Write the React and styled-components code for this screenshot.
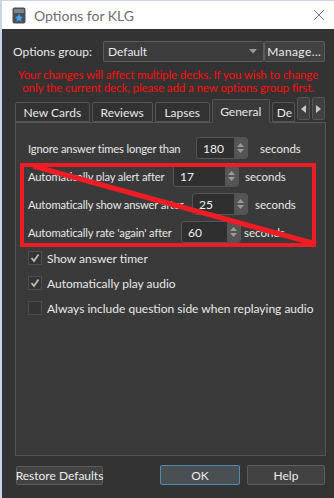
import React from "react";
import styled, { createGlobalStyle } from "styled-components";

const Global = createGlobalStyle`
  html, body { margin: 0; padding: 0; background: #c9d4e4; }
  body { font-family: Lato, "Open Sans", sans-serif; font-size: 12px; }
`;

const Window = styled.div`
  width: 332px;
  height: 497px;
  margin-left: 2px;
  margin-top: 1px;
  display: flex;
  flex-direction: column;
  background: #333333;
  overflow: hidden;
`;

const TitleBar = styled.div`
  height: 28px;
  background: #ffffff;
  display: flex;
  align-items: center;
  padding-left: 10px;
  gap: 8px;
  flex-shrink: 0;
`;

const TitleText = styled.span`
  flex: 1;
  color: #6d6d6d;
  font-size: 14px;
`;

const CloseX = styled.span`
  width: 30px;
  display: flex;
  justify-content: center;
`;

const Body = styled.div`
  flex: 1;
  display: flex;
  flex-direction: column;
  padding: 12px 9px 0 11px;
  color: #e8e8e8;
  & > * { flex-shrink: 0; }
`;

const GroupRow = styled.div`
  display: flex;
  align-items: center;
  height: 21px;
`;

const Label = styled.span`
  white-space: nowrap;
  flex-shrink: 0;
  width: ${(p) => (p.w ? `${p.w}px` : "auto")};
  font-size: ${(p) => p.fs || 12}px;
  letter-spacing: ${(p) => p.ls || 0}px;
`;

const Combo = styled.div`
  width: 162px;
  height: 21px;
  box-sizing: border-box;
  margin-left: ${(p) => p.ml}px;
  border: 1px solid #5c5c5c;
  border-radius: 2px;
  background: #3c3c3c;
  display: flex;
  align-items: center;
  padding: 0 6px 0 4px;
  justify-content: space-between;
`;

const Button = styled.div`
  box-sizing: border-box;
  height: ${(p) => p.h || 20}px;
  width: ${(p) => p.w}px;
  margin-left: ${(p) => p.ml || 0}px;
  border: 1px solid ${(p) => (p.focus ? "#4d8bb3" : "#5c5c5c")};
  border-radius: 2px;
  background: ${(p) => (p.focus ? "#4a4f53" : "#424242")};
  display: flex;
  align-items: center;
  justify-content: center;
  color: #ececec;
  white-space: nowrap;
  letter-spacing: ${(p) => p.ls || 0}px;
`;

const Warning = styled.div`
  margin-top: 6px;
  color: #ff0d0d;
  text-align: center;
  line-height: 13px;
  font-size: 11.5px;
  letter-spacing: -0.1px;
  white-space: nowrap;
  padding-right: 2px;
`;

const TabBar = styled.div`
  margin-top: 5px;
  height: 23px;
  display: flex;
  align-items: flex-end;
  gap: 2px;
  position: relative;
  z-index: 1;
  margin-left: 2px;
`;

const Tab = styled.div`
  box-sizing: border-box;
  width: ${(p) => p.w}px;
  height: ${(p) => (p.active ? 24 : 20)}px;
  border: 1px solid #555;
  border-bottom: ${(p) => (p.active ? "1px solid #3a3a3a" : "1px solid #555")};
  border-radius: 2px 2px 0 0;
  background: ${(p) => (p.active ? "#3a3a3a" : "#323232")};
  display: flex;
  align-items: center;
  justify-content: ${(p) => (p.clip ? "flex-start" : "center")};
  padding-left: ${(p) => (p.clip ? 4 : 0)}px;
  overflow: hidden;
  white-space: nowrap;
  color: #e8e8e8;
  margin-bottom: ${(p) => (p.active ? -1 : 0)}px;
`;

const ScrollBtn = styled.div`
  box-sizing: border-box;
  width: 13px;
  height: 23px;
  align-self: flex-start;
  margin-top: -2px;
  border: 1px solid #555;
  border-radius: 2px;
  background: #404040;
  display: flex;
  align-items: center;
  justify-content: center;
`;

const Panel = styled.div`
  width: 311px;
  height: 334px;
  box-sizing: border-box;
  border: 1px solid #555;
  background: #3a3a3a;
  padding: 14px 0 0 12px;
  display: flex;
  flex-direction: column;
  margin-left: 2px;
`;

const Row = styled.div`
  display: flex;
  align-items: center;
  height: 22px;
  margin-bottom: ${(p) => p.mb || 6}px;
`;

const Spin = styled.div`
  box-sizing: border-box;
  width: ${(p) => p.w}px;
  height: 22px;
  margin-left: ${(p) => p.ml}px;
  margin-right: ${(p) => p.mr}px;
  border: 1px solid #555;
  border-radius: 3px;
  background: #2f2f2f;
  display: flex;
  align-items: stretch;
  overflow: hidden;
  flex-shrink: 0;
`;

const SpinValue = styled.span`
  flex: 1;
  display: flex;
  align-items: center;
  padding-left: 6px;
  color: #f0f0f0;
`;

const SpinArrows = styled.div`
  width: 13px;
  background: #555555;
  display: flex;
  align-items: center;
  justify-content: center;
`;

const Highlight = styled.div`
  position: relative;
`;

const Mark = styled.svg`
  position: absolute;
  left: -8px;
  top: -2px;
  pointer-events: none;
`;

const Check = styled.div`
  display: flex;
  align-items: center;
  gap: 5px;
  height: 14px;
  margin-bottom: 11px;
`;

const Box = styled.div`
  box-sizing: border-box;
  width: 14px;
  height: 14px;
  border: 1px solid #505050;
  background: #343434;
  display: flex;
  align-items: center;
  justify-content: center;
`;

const Footer = styled.div`
  margin-top: 9px;
  display: flex;
  align-items: center;
  padding-left: 3px;
`;

const Spacer = styled.div`
  flex: 1;
`;

const Arrows = () => (
  <svg width="9" height="14" viewBox="0 0 9 14">
    <path d="M1 6 L4.5 2 L8 6 Z" fill="#9a9a9a" />
    <path d="M1 8 L4.5 12 L8 8 Z" fill="#9a9a9a" />
  </svg>
);

const Tick = ({ on }) =>
  on ? (
    <svg width="10" height="10" viewBox="0 0 10 10">
      <path d="M1.5 5 L4 8 L8.5 1.5" stroke="#bcbcbc" strokeWidth="1.8" fill="none" />
    </svg>
  ) : null;

const SpinRow = ({ label, lw, value, w, ml, mr, mb }) => (
  <Row mb={mb}>
    <Label w={lw} fs={11.2} ls={-0.15}>{label}</Label>
    <Spin w={w} ml={ml} mr={mr}>
      <SpinValue>{value}</SpinValue>
      <SpinArrows>
        <Arrows />
      </SpinArrows>
    </Spin>
    <Label fs={11.5}>seconds</Label>
  </Row>
);

export default function App() {
  return (
    <>
      <Global />
      <Window>
        <TitleBar>
          <svg width="14" height="17" viewBox="0 0 14 17">
            <rect x="0.5" y="0.5" width="13" height="16" rx="2" fill="#4a4f57" />
            <rect x="2" y="2" width="10" height="4" rx="1" fill="#7d838c" />
            <path d="M7 7 L8.3 9.6 L11 10 L9 11.8 L9.5 14.5 L7 13.2 L4.5 14.5 L5 11.8 L3 10 L5.7 9.6 Z" fill="#3fa3f0" />
          </svg>
          <TitleText>Options for KLG</TitleText>
          <CloseX>
            <svg width="12" height="12" viewBox="0 0 12 12">
              <path d="M1 1 L11 11 M11 1 L1 11" stroke="#7a7a7a" strokeWidth="1" />
            </svg>
          </CloseX>
        </TitleBar>
        <Body>
          <GroupRow>
            <Label>Options group:</Label>
            <Combo ml={11}>
              <span>Default</span>
              <svg width="8" height="5" viewBox="0 0 8 5">
                <path d="M0 0 L8 0 L4 4.5 Z" fill="#9a9a9a" />
              </svg>
            </Combo>
            <Spacer />
            <Button w={62} h={21} ls={0.4}>Manage...</Button>
          </GroupRow>
          <Warning>
            Your changes will affect multiple decks. If you wish to change
            <br />
            only the current deck, please add a new options group first.
          </Warning>
          <TabBar>
            <Tab w={76}>New Cards</Tab>
            <Tab w={62}>Reviews</Tab>
            <Tab w={56}>Lapses</Tab>
            <Tab w={59} active>General</Tab>
            <Tab w={24} clip>De</Tab>
            <ScrollBtn>
              <svg width="5" height="8" viewBox="0 0 5 8">
                <path d="M5 0 L0 4 L5 8 Z" fill="#c8c8c8" />
              </svg>
            </ScrollBtn>
            <ScrollBtn>
              <svg width="5" height="8" viewBox="0 0 5 8">
                <path d="M0 0 L5 4 L0 8 Z" fill="#c8c8c8" />
              </svg>
            </ScrollBtn>
          </TabBar>
          <Panel>
            <SpinRow label="Ignore answer times longer than" lw={155} value="180" w={52} ml={13} mr={12} />
            <Highlight>
              <SpinRow label="Automatically play alert after" lw={138} value="17" w={66} ml={7} mr={6} />
              <SpinRow label="Automatically show answer after" lw={157} value="25" w={56} ml={7} mr={7} />
              <SpinRow label="Automatically rate 'again' after" lw={146} value="60" w={60} ml={7} mr={3} mb={8} />
              <Mark width="300" height="86" viewBox="0 0 300 86">
                <rect x="2" y="2" width="292" height="80" fill="none" stroke="#ee1c25" strokeWidth="4" />
                <path d="M13 3 L296 81" stroke="#ee1c25" strokeWidth="5" />
              </Mark>
            </Highlight>
            <Check>
              <Box>
                <Tick on />
              </Box>
              <Label>Show answer timer</Label>
            </Check>
            <Check>
              <Box>
                <Tick on />
              </Box>
              <Label>Automatically play audio</Label>
            </Check>
            <Check>
              <Box />
              <Label>Always include question side when replaying audio</Label>
            </Check>
          </Panel>
          <Footer>
            <Button w={87} h={19}>Restore Defaults</Button>
            <Spacer />
            <Button w={80} h={20} focus>OK</Button>
            <Button w={78} h={20} ml={7}>Help</Button>
          </Footer>
        </Body>
      </Window>
    </>
  );
}
